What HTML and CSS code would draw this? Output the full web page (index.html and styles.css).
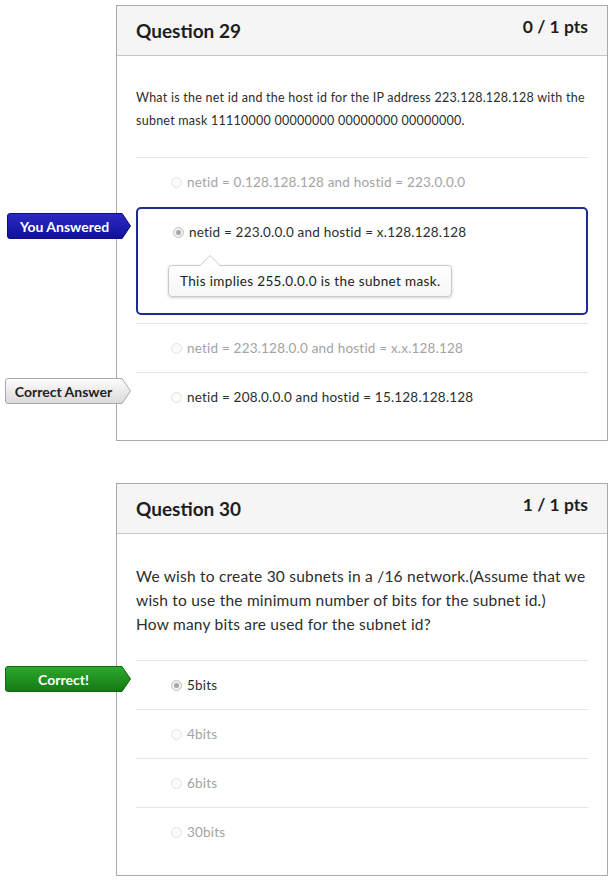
FILE: index.html
```html
<!DOCTYPE html>
<html lang="en">
  <head>
    <meta charset="UTF-8" />
    <meta name="viewport" content="width=device-width, initial-scale=1.0" />
    <title>Quiz Results</title>
    <link rel="stylesheet" href="styles.css">
  </head>
  <body>
    <div class="page">
      <!-- Question 29 -->
      <div class="question">
        <div class="question-header">
          <h2>Question 29</h2>
          <span class="points">0 / 1 pts</span>
        </div>
        <div class="question-body">
          <p class="question-text small">
            What is the net id and the host id for the IP address 223.128.128.128 with the<br>
            subnet mask 11110000 00000000 00000000 00000000.
          </p>
          <div class="answers">
            <div class="answer">
              <div class="answer-row muted"><span class="radio"></span>netid = 0.128.128.128 and hostid = 223.0.0.0</div>
            </div>
            <div class="answer selected">
              <div class="badge badge-blue">
                <svg viewBox="0 0 126 26" preserveAspectRatio="none">
                  <defs>
                    <linearGradient id="gBlue" x1="0" y1="0" x2="0" y2="1">
                      <stop offset="0" stop-color="#2b2bc4" />
                      <stop offset="1" stop-color="#10109a" />
                    </linearGradient>
                  </defs>
                  <path d="M3,0.5 H117 L125.5,13 L117,25.5 H3 Q0.5,25.5 0.5,23 V3 Q0.5,0.5 3,0.5 Z" fill="url(#gBlue)" stroke="#0c0c80" />
                </svg>
                <span>You Answered</span>
              </div>
              <div class="answer-row"><span class="radio checked"></span>netid = 223.0.0.0 and hostid = x.128.128.128</div>
              <div class="comment">This implies 255.0.0.0 is the subnet mask.</div>
            </div>
            <div class="answer">
              <div class="answer-row muted"><span class="radio"></span>netid = 223.128.0.0 and hostid = x.x.128.128</div>
            </div>
            <div class="answer">
              <div class="badge badge-gray">
                <svg viewBox="0 0 126 26" preserveAspectRatio="none">
                  <defs>
                    <linearGradient id="gGray" x1="0" y1="0" x2="0" y2="1">
                      <stop offset="0" stop-color="#fdfdfd" />
                      <stop offset="1" stop-color="#d9d9d9" />
                    </linearGradient>
                  </defs>
                  <path d="M3,0.5 H117 L125.5,13 L117,25.5 H3 Q0.5,25.5 0.5,23 V3 Q0.5,0.5 3,0.5 Z" fill="url(#gGray)" stroke="#a8a8a8" />
                </svg>
                <span>Correct Answer</span>
              </div>
              <div class="answer-row"><span class="radio"></span>netid = 208.0.0.0 and hostid = 15.128.128.128</div>
            </div>
          </div>
        </div>
      </div>

      <!-- Question 30 -->
      <div class="question">
        <div class="question-header">
          <h2>Question 30</h2>
          <span class="points">1 / 1 pts</span>
        </div>
        <div class="question-body">
          <p class="question-text">
            We wish to create 30 subnets in a /16 network.(Assume that we<br>
            wish to use the minimum number of bits for the subnet id.)<br>
            How many bits are used for the subnet id?
          </p>
          <div class="answers">
            <div class="answer">
              <div class="badge badge-green">
                <svg viewBox="0 0 126 26" preserveAspectRatio="none">
                  <defs>
                    <linearGradient id="gGreen" x1="0" y1="0" x2="0" y2="1">
                      <stop offset="0" stop-color="#2ea82e" />
                      <stop offset="1" stop-color="#137a13" />
                    </linearGradient>
                  </defs>
                  <path d="M3,0.5 H117 L125.5,13 L117,25.5 H3 Q0.5,25.5 0.5,23 V3 Q0.5,0.5 3,0.5 Z" fill="url(#gGreen)" stroke="#0f6a0f" />
                </svg>
                <span>Correct!</span>
              </div>
              <div class="answer-row"><span class="radio checked"></span>5bits</div>
            </div>
            <div class="answer">
              <div class="answer-row muted"><span class="radio"></span>4bits</div>
            </div>
            <div class="answer">
              <div class="answer-row muted"><span class="radio"></span>6bits</div>
            </div>
            <div class="answer">
              <div class="answer-row muted"><span class="radio"></span>30bits</div>
            </div>
          </div>
        </div>
      </div>
    </div>
  </body>
</html>
```

FILE: styles.css
```css
* {
  margin: 0;
  padding: 0;
  box-sizing: border-box;
}

body {
  font-family: 'Lato', 'Liberation Sans', sans-serif;
  background: white;
  color: #2d2d2d;
}

.page {
  padding: 5px 0 0 116px;
}

.question {
  width: 492px;
  border: 1px solid #a9a9a9;
  background: white;
  margin-bottom: 42px;
}

.question-header {
  height: 50px;
  background: #f5f5f5;
  border-bottom: 1px solid #c7c7c7;
  padding: 0 19px 0 19px;
  display: flex;
  justify-content: space-between;
  align-items: flex-start;
}

.question-header h2 {
  font-size: 19px;
  font-weight: 700;
  line-height: 24px;
  margin-top: 13px;
  color: #1e1e1e;
}

.points {
  font-size: 17.5px;
  font-weight: 700;
  line-height: 20px;
  margin-top: 11px;
  color: #1e1e1e;
}

.question-body {
  padding: 30px 19px 19px 19px;
}

.question-text {
  font-size: 15.5px;
  letter-spacing: 0.22px;
  line-height: 24px;
  color: #2d2d2d;
  margin-bottom: 24px;
  white-space: nowrap;
}

.question-text.small {
  font-size: 12.5px;
  letter-spacing: 0.25px;
  line-height: 23px;
  margin-bottom: 25px;
}

.answer {
  position: relative;
  border-top: 1px solid #e6e6e6;
}

.answer-row {
  height: 48px;
  display: flex;
  align-items: center;
  padding-left: 35px;
  font-size: 13.5px;
  letter-spacing: 0.2px;
  color: #2d2d2d;
}

.answer-row.muted {
  color: #a3a3a3;
}

.radio {
  width: 11px;
  height: 11px;
  border-radius: 50%;
  border: 1px solid #e2e2e2;
  background: #fbfbfb;
  margin-right: 5px;
  display: inline-flex;
  align-items: center;
  justify-content: center;
}

.radio.checked {
  border-color: #c4c4c4;
  background: #efefef;
}

.radio.checked::after {
  content: '';
  width: 5px;
  height: 5px;
  border-radius: 50%;
  background: #a8a8a8;
}

.answer.selected {
  border: 2px solid #1f2b8f;
  border-radius: 5px;
  margin-top: 1px;
  margin-bottom: 8px;
  padding-bottom: 16px;
}

.answer.selected .answer-row {
  height: 46px;
}

.comment {
  position: relative;
  display: inline-block;
  margin: 10px 0 0 30px;
  height: 32px;
  line-height: 30px;
  padding: 0 11px;
  font-size: 13.5px;
  letter-spacing: 0.35px;
  color: #222;
  background: linear-gradient(#ffffff, #f6f6f6);
  border: 1px solid #c9c9c9;
  border-radius: 4px;
  box-shadow: 0 1px 3px rgba(0, 0, 0, 0.18);
}

.comment::before,
.comment::after {
  content: '';
  position: absolute;
  left: 31px;
  border: 10px solid transparent;
  border-top: 0;
}

.comment::before {
  top: -11px;
  border-bottom: 10px solid #c9c9c9;
}

.comment::after {
  top: -10px;
  border-bottom: 10px solid #ffffff;
}

.badge {
  position: absolute;
  top: 5px;
  left: -131px;
  width: 126px;
  height: 26px;
  display: flex;
  align-items: center;
  justify-content: center;
  padding-right: 9px;
  font-size: 14px;
  font-weight: 700;
}

.badge svg {
  position: absolute;
  top: 0;
  left: 0;
  width: 100%;
  height: 100%;
}

.badge span {
  position: relative;
}

.badge-blue {
  top: 4px;
  left: -131px;
  width: 124px;
  color: white;
}

.badge-gray {
  color: #1e1e1e;
}

.badge-green {
  color: white;
}
```
